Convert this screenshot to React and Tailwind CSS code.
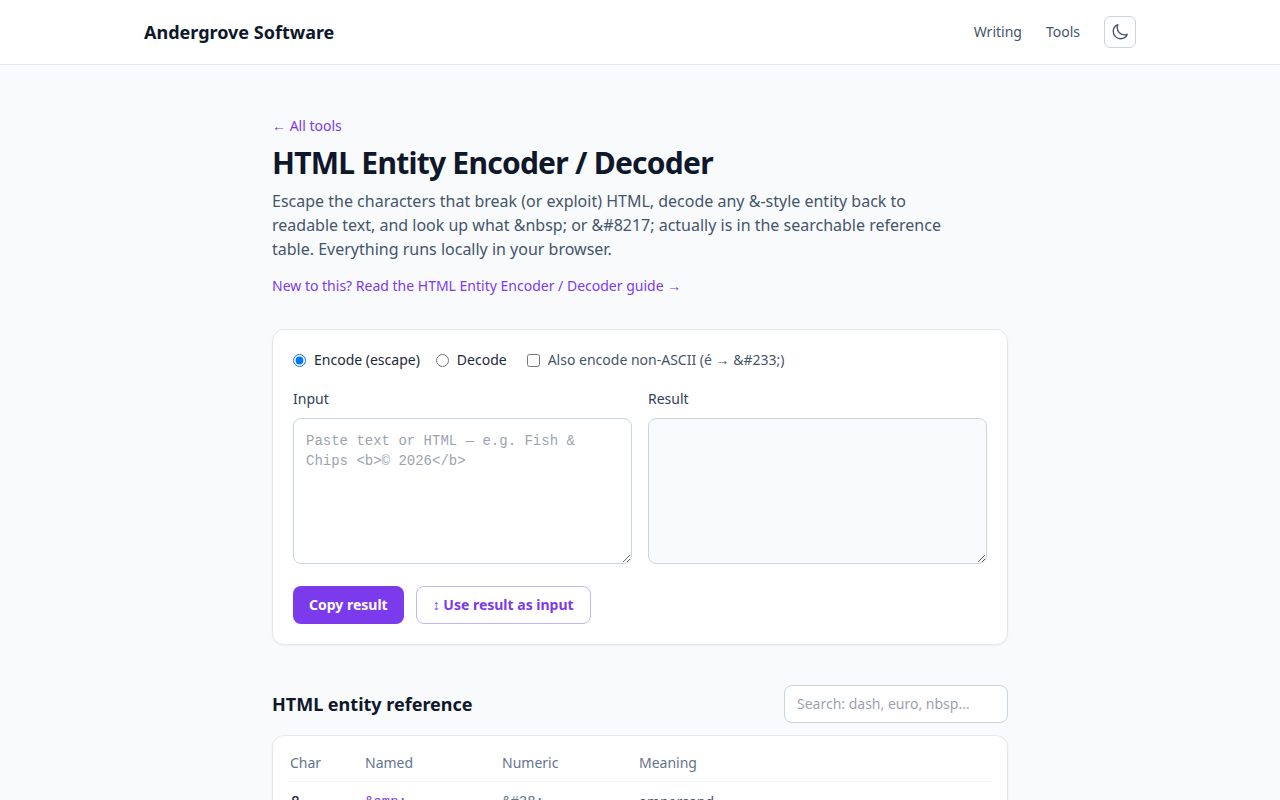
import { useState } from "react";

const ENTITIES = [
  ["&", "&amp;", "&#38;", "ampersand"],
  ["<", "&lt;", "&#60;", "less-than sign"],
  [">", "&gt;", "&#62;", "greater-than sign"],
  ["\"", "&quot;", "&#34;", "double quotation mark"],
  ["©", "&copy;", "&#169;", "copyright sign"],
  ["€", "&euro;", "&#8364;", "euro sign"],
  ["—", "&mdash;", "&#8212;", "em dash"],
];

const BASIC = { "&": "&amp;", "<": "&lt;", ">": "&gt;", "\"": "&quot;", "'": "&#39;" };

function encode(text, nonAscii) {
  const escaped = text.replace(/[&<>"']/g, (c) => BASIC[c]);
  if (!nonAscii) return escaped;
  return Array.from(escaped, (c) => (c.codePointAt(0) > 126 ? `&#${c.codePointAt(0)};` : c)).join("");
}

function decode(text) {
  const box = document.createElement("textarea");
  box.innerHTML = text;
  return box.value;
}

function Header() {
  return (
    <header className="border-b border-slate-200 bg-white">
      <div className="mx-auto flex h-16 max-w-5xl items-center justify-between px-4">
        <a href="#home" className="text-lg font-bold text-slate-900">Andergrove Software</a>
        <nav className="flex items-center gap-6 text-sm text-slate-600">
          <a href="#writing">Writing</a>
          <a href="#tools">Tools</a>
          <button
            type="button"
            aria-label="Toggle dark mode"
            className="flex size-8 items-center justify-center rounded-md border border-slate-300"
          >
            <svg viewBox="0 0 24 24" fill="none" stroke="currentColor" strokeWidth="1.8" strokeLinecap="round" strokeLinejoin="round" className="size-[18px]">
              <path d="M21.752 15.002A9.718 9.718 0 0 1 18 15.75c-5.385 0-9.75-4.365-9.75-9.75 0-1.33.266-2.597.748-3.752A9.753 9.753 0 0 0 3 11.25C3 16.635 7.365 21 12.75 21a9.753 9.753 0 0 0 9.002-5.998Z" />
            </svg>
          </button>
        </nav>
      </div>
    </header>
  );
}

function Converter() {
  const [mode, setMode] = useState("encode");
  const [nonAscii, setNonAscii] = useState(false);
  const [input, setInput] = useState("");
  const result = mode === "encode" ? encode(input, nonAscii) : decode(input);

  return (
    <section className="mt-8 rounded-xl border border-slate-200 bg-white p-5 shadow-xs">
      <div className="flex flex-wrap items-center gap-5 text-sm">
        <div className="flex gap-4">
          <label className="flex items-center gap-2">
            <input type="radio" name="mode" checked={mode === "encode"} onChange={() => setMode("encode")} />
            Encode (escape)
          </label>
          <label className="flex items-center gap-2">
            <input type="radio" name="mode" checked={mode === "decode"} onChange={() => setMode("decode")} />
            Decode
          </label>
        </div>
        <label className="flex items-center gap-2 text-slate-600">
          <input type="checkbox" checked={nonAscii} onChange={(e) => setNonAscii(e.target.checked)} />
          Also encode non-ASCII (é → &amp;#233;)
        </label>
      </div>

      <div className="mt-4 grid gap-4 sm:grid-cols-2">
        <div>
          <label htmlFor="source" className="text-sm text-slate-700">Input</label>
          <textarea
            id="source"
            rows={6}
            value={input}
            onChange={(e) => setInput(e.target.value)}
            placeholder="Paste text or HTML — e.g. Fish & Chips <b>© 2026</b>"
            className="mt-2 w-full rounded-lg border border-slate-300 bg-white p-3 font-['Liberation_Mono',monospace] text-sm placeholder:text-[#9ca3af]"
          />
        </div>
        <div>
          <label htmlFor="result" className="text-sm text-slate-700">Result</label>
          <textarea
            id="result"
            rows={6}
            readOnly
            value={result}
            className="mt-2 w-full rounded-lg border border-slate-300 bg-slate-50 p-3 font-['Liberation_Mono',monospace] text-sm"
          />
        </div>
      </div>

      <div className="mt-4 flex flex-wrap gap-3 text-sm font-bold">
        <button
          type="button"
          onClick={() => navigator.clipboard?.writeText(result)}
          className="rounded-lg bg-[#7c3aed] px-4 py-2 text-white"
        >
          Copy result
        </button>
        <button
          type="button"
          onClick={() => setInput(result)}
          className="rounded-lg border border-[#c4b5fd] px-4 py-2 text-[#7c3aed]"
        >
          ↕ Use result as input
        </button>
      </div>
    </section>
  );
}

function Reference() {
  const [query, setQuery] = useState("");
  const rows = ENTITIES.filter((row) => row.join(" ").toLowerCase().includes(query.toLowerCase()));

  return (
    <section className="mt-10">
      <div className="flex flex-wrap items-center justify-between gap-3">
        <h2 className="text-lg font-bold text-slate-900">HTML entity reference</h2>
        <input
          type="search"
          aria-label="Search entities"
          value={query}
          onChange={(e) => setQuery(e.target.value)}
          placeholder="Search: dash, euro, nbsp…"
          className="w-56 rounded-lg border border-slate-300 bg-white px-3 py-2 text-sm placeholder:text-[#9ca3af]"
        />
      </div>
      <div className="mt-3 rounded-xl border border-slate-200 bg-white p-4 shadow-xs">
        <table className="w-full table-fixed text-left text-sm">
          <thead>
            <tr className="border-b border-slate-100 text-slate-500">
              <th className="w-[75px] px-px pt-px pb-2 font-normal">Char</th>
              <th className="w-[137px] px-px pt-px pb-2 font-normal">Named</th>
              <th className="w-[137px] px-px pt-px pb-2 font-normal">Numeric</th>
              <th className="px-px pt-px pb-2 font-normal">Meaning</th>
            </tr>
          </thead>
          <tbody>
            {rows.map(([char, named, numeric, meaning]) => (
              <tr key={named} className="border-b border-slate-100">
                <td className="px-px py-1.5 text-lg">{char}</td>
                <td className="px-px py-1.5 font-['Liberation_Mono',monospace] text-[#7c3aed]">{named}</td>
                <td className="px-px py-1.5 font-['Liberation_Mono',monospace] text-slate-500">{numeric}</td>
                <td className="px-px py-1.5 text-slate-600">{meaning}</td>
              </tr>
            ))}
          </tbody>
        </table>
      </div>
    </section>
  );
}

export default function App() {
  return (
    <div className="min-h-screen bg-slate-50 font-['Noto_Sans',sans-serif] text-slate-800">
      <Header />
      <main className="mx-auto max-w-3xl px-4 py-12">
        <div>
          <a href="#tools" className="text-sm text-[#7c3aed]">← All tools</a>
        </div>
        <h1 className="mt-2 text-3xl font-bold tracking-tight text-slate-900">HTML Entity Encoder / Decoder</h1>
        <p className="mt-2 max-w-2xl text-slate-600">
          Escape the characters that break (or exploit) HTML, decode any &amp;-style entity back to readable text, and
          look up what &amp;nbsp; or &amp;#8217; actually is in the searchable reference table. Everything runs locally
          in your browser.
        </p>
        <p className="mt-3">
          <a href="#guide" className="text-sm text-[#7c3aed]">
            New to this? Read the HTML Entity Encoder / Decoder guide →
          </a>
        </p>
        <Converter />
        <Reference />
      </main>
    </div>
  );
}
